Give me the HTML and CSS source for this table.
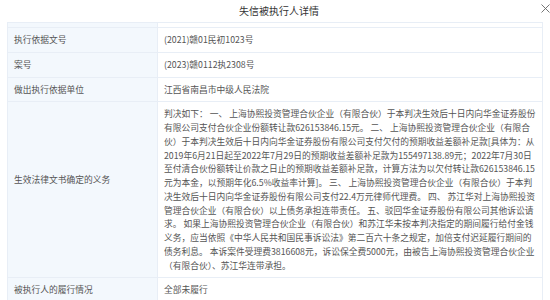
FILE: index.html
```html
<!DOCTYPE html>
<html lang="zh-CN">
<head>
<meta charset="utf-8">
<title>失信被执行人详情</title>
<link rel="stylesheet" href="styles.css">
</head>
<body>
<div class="modal">
  <div class="modal-header">
    <span class="modal-title">失信被执行人详情</span>
    <svg class="close" width="9" height="9" viewBox="0 0 9 9"><path d="M0.5 0.5 L8.5 8.5 M8.5 0.5 L0.5 8.5" stroke="#666" stroke-width="0.9" fill="none"/></svg>
  </div>
  <table class="detail">
    <tr class="spacer"><td class="label"></td><td class="value"></td></tr>
    <tr><td class="label">执行依据文号</td><td class="value">(2021)赣01民初1023号</td></tr>
    <tr><td class="label">案号</td><td class="value">(2023)赣0112执2308号</td></tr>
    <tr><td class="label">做出执行依据单位</td><td class="value">江西省南昌市中级人民法院</td></tr>
    <tr><td class="label label-tall">生效法律文书确定的义务</td><td class="value long">判决如下： 一、 上海协熙投资管理合伙企业（有限合伙）于本判决生效后十日内向华金证券股份有限公司支付合伙企业份额转让款626153846.15元。 二、 上海协熙投资管理合伙企业（有限合伙）于本判决生效后十日内向华金证券股份有限公司支付欠付的预期收益差额补足款[具体为：从2019年6月21日起至2022年7月29日的预期收益差额补足款为155497138.89元；2022年7月30日至付清合伙份额转让价款之日止的预期收益差额补足款，计算方法为以欠付转让款626153846.15元为本金，以预期年化6.5%收益率计算]。 三、 上海协熙投资管理合伙企业（有限合伙）于本判决生效后十日内向华金证券股份有限公司支付22.4万元律师代理费。 四、 苏江华对上海协熙投资管理合伙企业（有限合伙）以上债务承担连带责任。 五、驳回华金证券股份有限公司其他诉讼请求。 如果上海协熙投资管理合伙企业（有限合伙）和苏江华未按本判决指定的期间履行给付金钱义务，应当依照《中华人民共和国民事诉讼法》第二百六十条之规定，加倍支付迟延履行期间的债务利息。 本诉案件受理费3816608元，诉讼保全费5000元，由被告上海协熙投资管理合伙企业（有限合伙）、苏江华连带承担。</td></tr>
    <tr><td class="label">被执行人的履行情况</td><td class="value">全部未履行</td></tr>
  </table>
</div>
</body>
</html>
```

FILE: styles.css
```css
html, body {
  margin: 0;
  padding: 0;
  background: #ffffff;
}
body {
  width: 550px;
  height: 300px;
  overflow: hidden;
  font-family: "Noto Sans CJK SC", "Noto Sans", sans-serif;
  color: #555;
}
.modal {
  width: 550px;
}
.modal-header {
  position: relative;
  height: 22px;
  display: flex;
  align-items: center;
  justify-content: center;
  padding-left: 8px;
  box-sizing: border-box;
}
.modal-title {
  font-size: 10px;
  color: #333;
  line-height: 12px;
}
.close {
  position: absolute;
  left: 541px;
  top: 4px;
}
.detail {
  margin-left: 7px;
  width: 536px;
  border-collapse: collapse;
  table-layout: fixed;
  font-size: 8.75px;
  line-height: 13.75px;
}
.detail td {
  border: 1px solid #e8eef6;
  padding: 5px 6px;
  vertical-align: middle;
}
.detail td.label {
  width: 150px;
  box-sizing: border-box;
  background: #f3f8fd;
  color: #555;
}
.detail td.label-tall {
  padding-bottom: 25px;
}
.detail td.value {
  background: #fff;
  color: #555;
  word-break: break-all;
}
.detail tr.spacer td {
  height: 5px;
  padding: 0;
  box-sizing: border-box;
}
```
